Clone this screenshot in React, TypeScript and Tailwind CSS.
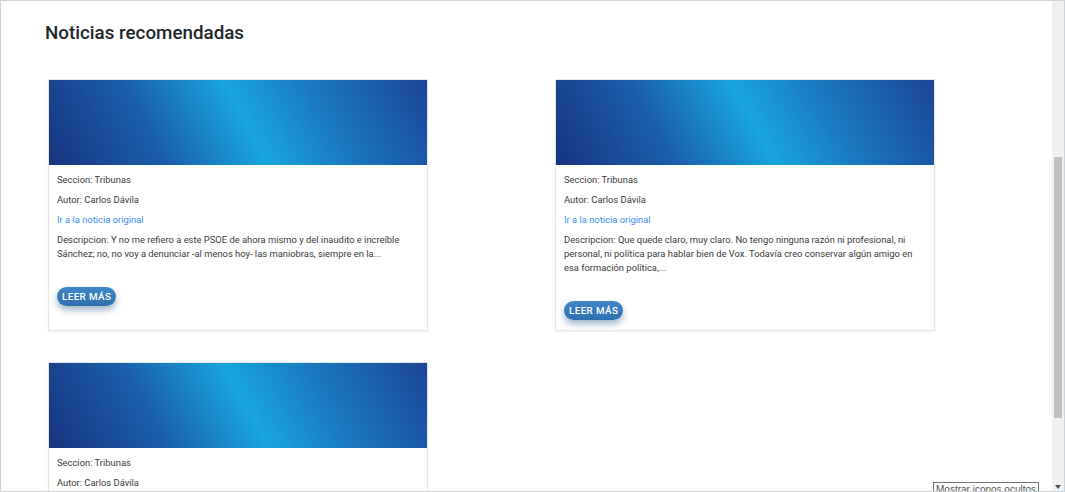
import React from 'react';

type Noticia = {
  id: number;
  seccion: string;
  autor: string;
  descripcion: string;
};

const noticias: Noticia[] = [
  {
    id: 1,
    seccion: 'Tribunas',
    autor: 'Carlos Dávila',
    descripcion:
      'Y no me refiero a este PSOE de ahora mismo y del inaudito e increíble Sánchez; no, no voy a denunciar -al menos hoy- las maniobras, siempre en la...',
  },
  {
    id: 2,
    seccion: 'Tribunas',
    autor: 'Carlos Dávila',
    descripcion:
      'Que quede claro, muy claro. No tengo ninguna razón ni profesional, ni personal, ni política para hablar bien de Vox. Todavía creo conservar algún amigo en esa formación política,...',
  },
  {
    id: 3,
    seccion: 'Tribunas',
    autor: 'Carlos Dávila',
    descripcion: 'Lorem ipsum',
  },
];

const NewsCard: React.FC<{ noticia: Noticia }> = ({ noticia }) => (
  <div className="flex flex-col border border-[#e6e6e6] bg-white shadow-[0_1px_2px_rgba(0,0,0,0.06)]">
    {/* Cabecera con degradado */}
    <div className="h-[85px] bg-[linear-gradient(62deg,#17347f_0%,#1b5eab_28%,#17a6de_52%,#1a78bf_72%,#1c4596_100%)]" />
    <div className="flex flex-col px-[8px] pt-[8px] pb-[10px] text-[9.4px] leading-[14px] text-[#3a3a3a]">
      <p className="mb-[6px]">Seccion: {noticia.seccion}</p>
      <p className="mb-[6px]">Autor: {noticia.autor}</p>
      <a href="#" className="mb-[6px] text-[#3d8cf5]">
        Ir a la noticia original
      </a>
      <p>Descripcion: {noticia.descripcion}</p>
      <div className="mt-[26px]">
        <button className="h-[19px] rounded-full bg-[linear-gradient(#3f86c6,#2f70b0)] px-[5px] text-[9.8px] font-medium tracking-[0.4px] text-white shadow-[0_4px_7px_rgba(40,90,140,0.45)]">
          LEER MÁS
        </button>
      </div>
    </div>
  </div>
);

const App: React.FC = () => {
  return (
    <div className="relative flex h-[492px] w-[1065px] overflow-hidden border border-[#cbd4dd] bg-white font-['Roboto',sans-serif]">
      <div className="flex-1 overflow-hidden">
        <h1 className="ml-[44px] mt-[21px] text-[18.8px] font-medium leading-[22px] text-[#212529]">
          Noticias recomendadas
        </h1>

        <div className="ml-[47px] mt-[35px] grid grid-cols-[380px_380px] items-stretch gap-x-[127px] gap-y-[31px]">
          {noticias.slice(0, 2).map(n => (
            <NewsCard key={n.id} noticia={n} />
          ))}
          <NewsCard noticia={noticias[2]} />
        </div>
      </div>

      {/* Barra de desplazamiento */}
      <div className="relative flex w-[12px] flex-col bg-[#f0f0f0]">
        <div className="mx-[2px] mt-[156px] h-[261px] bg-[#c1c1c1]" />
        <div className="mt-auto mb-[2px] flex justify-center">
          <div className="h-0 w-0 border-x-[3px] border-t-[4px] border-x-transparent border-t-[#505050]" />
        </div>
      </div>

      {/* Tooltip del sistema */}
      <div className="absolute bottom-[-6px] left-[932px] border border-[#767676] bg-white px-[2px] text-[10px] leading-[13px] text-[#575757] font-['Liberation_Sans',sans-serif]">
        Mostrar iconos ocultos
      </div>
    </div>
  );
};

export default App;
